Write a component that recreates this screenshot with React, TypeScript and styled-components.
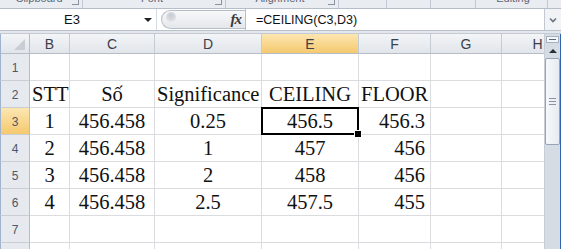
import React from 'react';
import styled, { createGlobalStyle, css } from 'styled-components';

const GlobalStyle = createGlobalStyle`
  html, body { margin: 0; padding: 0; background: #fff; }
  body { width: 561px; height: 249px; overflow: hidden; font-family: "Liberation Sans", Arial, sans-serif; }
  * { box-sizing: border-box; }
`;

const Window = styled.div`
  width: 561px;
  height: 249px;
  display: flex;
  flex-direction: column;
  overflow: hidden;
  background: #fff;
`;

const Ribbon = styled.div`
  height: 9px;
  flex: none;
  display: flex;
  background: #e9edf2;
  border-bottom: 1px solid #b4bdc8;
  overflow: hidden;
`;

const RibbonGroup = styled.div<{ $w: number }>`
  width: ${(p) => p.$w}px;
  flex: none;
  display: flex;
  align-items: flex-start;
  padding: 0 3px 0 6px;
  border-right: 1px solid #c2c9d2;
`;

const GroupLabel = styled.span`
  flex: 1;
  text-align: center;
  font-size: 11px;
  line-height: 12px;
  margin-top: -8px;
  color: #5d6675;
  white-space: nowrap;
`;

const Launcher = styled.span`
  flex: none;
  width: 7px;
  height: 5px;
  border-right: 1px solid #8a93a0;
  border-bottom: 1px solid #8a93a0;
`;

const FormulaRow = styled.div`
  height: 22px;
  flex: none;
  display: flex;
  align-items: stretch;
  background: #fff;
  border-bottom: 1px solid #b9c1cb;
`;

const NameBox = styled.div`
  width: 157px;
  flex: none;
  display: flex;
  align-items: center;
  padding: 0 4px 0 0;
  border-right: 1px solid #d5dae0;
  font-size: 13px;
  color: #111;
`;

const NameText = styled.span`
  flex: 1;
  text-align: center;
  padding-left: 0px;
`;

const DropArrow = styled.span`
  width: 0;
  height: 0;
  border-left: 4px solid transparent;
  border-right: 4px solid transparent;
  border-top: 4px solid #222;
`;

const PillWrap = styled.div`
  width: 88px;
  flex: none;
  display: flex;
  align-items: center;
  padding: 1px 0 1px 4px;
  background: #fff;
`;

const Pill = styled.div`
  flex: 1;
  height: 19px;
  display: flex;
  align-items: center;
  justify-content: space-between;
  padding: 0 4px 0 4px;
  border: 1px solid #b7bec8;
  border-right: none;
  border-radius: 10px 0 0 10px;
  background: linear-gradient(#f7f8fa, #e4e7eb);
`;

const PillDot = styled.span`
  width: 10px;
  height: 10px;
  border-radius: 50%;
  background: radial-gradient(circle at 50% 35%, #c5cad1, #dfe2e6 70%);
  margin-top: -5px;
`;

const Fx = styled.span`
  font-family: "Liberation Serif", "Times New Roman", serif;
  font-style: italic;
  font-weight: bold;
  font-size: 15px;
  color: #3a3a3a;
  letter-spacing: -1px;
`;

const FormulaInput = styled.div`
  flex: 1;
  display: flex;
  align-items: center;
  padding-left: 10px;
  border-left: 1px solid #b7bec8;
  font-size: 12.5px;
  color: #111;
`;

const ExpandBtn = styled.div`
  width: 17px;
  flex: none;
  display: flex;
  align-items: center;
  justify-content: center;
  border-left: 1px solid #c2c9d2;
  background: #f1f3f6;
`;

const Band = styled.div`
  height: 3px;
  flex: none;
  background: #e3e7ec;
  border-bottom: 1px solid #c3cad3;
`;

const Sheet = styled.div`
  flex: 1;
  display: flex;
  min-height: 0;
`;

const Grid = styled.div`
  width: 544px;
  flex: none;
  overflow: hidden;
  display: grid;
  grid-template-columns: 30px 40px 85px 107px 97px 72px 71px 72px;
  grid-template-rows: 20px repeat(8, 27px);
`;

const Corner = styled.div`
  display: flex;
  align-items: flex-end;
  justify-content: flex-end;
  padding: 0 4px 3px 0;
  background: linear-gradient(#f3f5f7, #e1e5ea);
  border-right: 1px solid #b6bdc7;
  border-bottom: 1px solid #b6bdc7;
  border-left: 1px solid #9fb3cc;
`;

const CornerTri = styled.span`
  width: 0;
  height: 0;
  border-left: 11px solid transparent;
  border-bottom: 11px solid #c9ced5;
`;

const ColHeader = styled.div<{ $active?: boolean }>`
  background: ${(p) =>
    p.$active ? 'linear-gradient(#fce6b1, #f5c96f)' : 'linear-gradient(#f3f5f7, #e1e5ea)'};
  display: flex;
  align-items: center;
  justify-content: center;
  border-right: 1px solid #c5cbd3;
  border-bottom: 1px solid #b6bdc7;
  font-size: 14px;
  color: #3c4048;
`;

const RowHeader = styled.div<{ $active?: boolean }>`
  background: ${(p) => (p.$active ? 'linear-gradient(#fce6b1, #f5c96f)' : '#e6e9ee')};
  display: flex;
  align-items: flex-end;
  justify-content: center;
  padding-bottom: 5px;
  border-right: 1px solid #b6bdc7;
  border-bottom: 1px solid #c9ced5;
  border-left: 1px solid #9fb3cc;
  font-size: 12px;
  color: #4c5868;
`;

const Cell = styled.div<{ $align?: 'left' | 'center' | 'right'; $selected?: boolean }>`
  position: relative;
  border-right: 1px solid #dadcdf;
  border-bottom: 1px solid #dadcdf;
  font-family: "Liberation Serif", "Times New Roman", serif;
  font-size: 20.5px;
  line-height: 26px;
  color: #111;
  white-space: nowrap;
  text-align: ${(p) => p.$align || 'center'};
  padding: 0 ${(p) => (p.$align === 'right' ? '5px' : '2px')} 0 2px;
  ${(p) =>
    p.$selected &&
    css`
      z-index: 2;
      &::after {
        content: '';
        position: absolute;
        top: -1px;
        left: -1px;
        right: -1px;
        bottom: -1px;
        border: 2px solid #000;
        pointer-events: none;
      }
      &::before {
        content: '';
        position: absolute;
        right: -4px;
        bottom: -4px;
        width: 6px;
        height: 6px;
        background: #000;
        border: 1px solid #fff;
        z-index: 3;
      }
    `}
`;

const Scrollbar = styled.div`
  width: 17px;
  flex: none;
  display: flex;
  flex-direction: column;
  align-items: center;
  background: #d6dce4;
  border-left: 1px solid #c7ced7;
  border-right: 1px solid #2f65b3;
  padding-top: 2px;
`;

const SplitBox = styled.div`
  width: 13px;
  height: 7px;
  background: #f4f6f9;
  border: 1px solid #a7b1be;
  display: flex;
  align-items: center;
  justify-content: center;
`;

const SplitLine = styled.span`
  width: 7px;
  height: 1px;
  background: #5c6675;
`;

const ArrowBtn = styled.div`
  width: 15px;
  height: 15px;
  display: flex;
  align-items: center;
  justify-content: center;
`;

const UpTri = styled.span`
  width: 0;
  height: 0;
  border-left: 4px solid transparent;
  border-right: 4px solid transparent;
  border-bottom: 4px solid #2a2f37;
`;

const Thumb = styled.div`
  width: 15px;
  height: 87px;
  margin-top: 0px;
  border: 1px solid #98a4b4;
  border-radius: 2px;
  background: linear-gradient(90deg, #f6f8fa, #e7ebf0);
  display: flex;
  flex-direction: column;
  align-items: center;
  justify-content: center;
  gap: 2px;
`;

const Grip = styled.span`
  width: 7px;
  height: 1px;
  background: #8792a2;
`;

type Align = 'left' | 'center' | 'right';
type Row = { n: number; cells: [string, Align][] };

const cols = ['B', 'C', 'D', 'E', 'F', 'G', 'H'];

const rows: Row[] = [
  { n: 1, cells: [] },
  {
    n: 2,
    cells: [
      ['STT', 'center'],
      ['Số', 'center'],
      ['Significance', 'center'],
      ['CEILING', 'center'],
      ['FLOOR', 'center'],
    ],
  },
  {
    n: 3,
    cells: [
      ['1', 'center'],
      ['456.458', 'center'],
      ['0.25', 'center'],
      ['456.5', 'center'],
      ['456.3', 'right'],
    ],
  },
  {
    n: 4,
    cells: [
      ['2', 'center'],
      ['456.458', 'center'],
      ['1', 'center'],
      ['457', 'center'],
      ['456', 'right'],
    ],
  },
  {
    n: 5,
    cells: [
      ['3', 'center'],
      ['456.458', 'center'],
      ['2', 'center'],
      ['458', 'center'],
      ['456', 'right'],
    ],
  },
  {
    n: 6,
    cells: [
      ['4', 'center'],
      ['456.458', 'center'],
      ['2.5', 'center'],
      ['457.5', 'center'],
      ['455', 'right'],
    ],
  },
  { n: 7, cells: [] },
  { n: 8, cells: [] },
];

const groups: { w: number; label: string; launcher: boolean }[] = [
  { w: 83, label: 'Clipboard', launcher: true },
  { w: 143, label: 'Font', launcher: true },
  { w: 113, label: 'Alignment', launcher: true },
  { w: 48, label: '', launcher: false },
  { w: 44, label: '', launcher: false },
  { w: 45, label: '', launcher: false },
  { w: 72, label: 'Editing', launcher: false },
];

export default function App() {
  return (
    <>
      <GlobalStyle />
      <Window>
        <Ribbon>
          {groups.map((g, i) => (
            <RibbonGroup key={i} $w={g.w}>
              <GroupLabel>{g.label}</GroupLabel>
              {g.launcher && <Launcher />}
            </RibbonGroup>
          ))}
        </Ribbon>
        <FormulaRow>
          <NameBox>
            <NameText>E3</NameText>
            <DropArrow />
          </NameBox>
          <PillWrap>
            <Pill>
              <PillDot />
              <Fx>fx</Fx>
            </Pill>
          </PillWrap>
          <FormulaInput>=CEILING(C3,D3)</FormulaInput>
          <ExpandBtn>
            <svg width="8" height="6" viewBox="0 0 8 6">
              <path d="M1 1.5 L4 4.5 L7 1.5" fill="none" stroke="#6a7484" strokeWidth="1.6" />
            </svg>
          </ExpandBtn>
        </FormulaRow>
        <Band />
        <Sheet>
          <Grid>
            <Corner>
              <CornerTri />
            </Corner>
            {cols.map((c) => (
              <ColHeader key={c} $active={c === 'E'}>
                {c}
              </ColHeader>
            ))}
            {rows.map((r) => (
              <React.Fragment key={r.n}>
                <RowHeader $active={r.n === 3}>{r.n}</RowHeader>
                {cols.map((c, ci) => {
                  const cell = r.cells[ci];
                  return (
                    <Cell
                      key={c}
                      $align={cell ? cell[1] : 'center'}
                      $selected={r.n === 3 && c === 'E'}
                    >
                      {cell ? cell[0] : ''}
                    </Cell>
                  );
                })}
              </React.Fragment>
            ))}
          </Grid>
          <Scrollbar>
            <SplitBox>
              <SplitLine />
            </SplitBox>
            <ArrowBtn>
              <UpTri />
            </ArrowBtn>
            <Thumb>
              <Grip />
              <Grip />
              <Grip />
            </Thumb>
          </Scrollbar>
        </Sheet>
      </Window>
    </>
  );
}
